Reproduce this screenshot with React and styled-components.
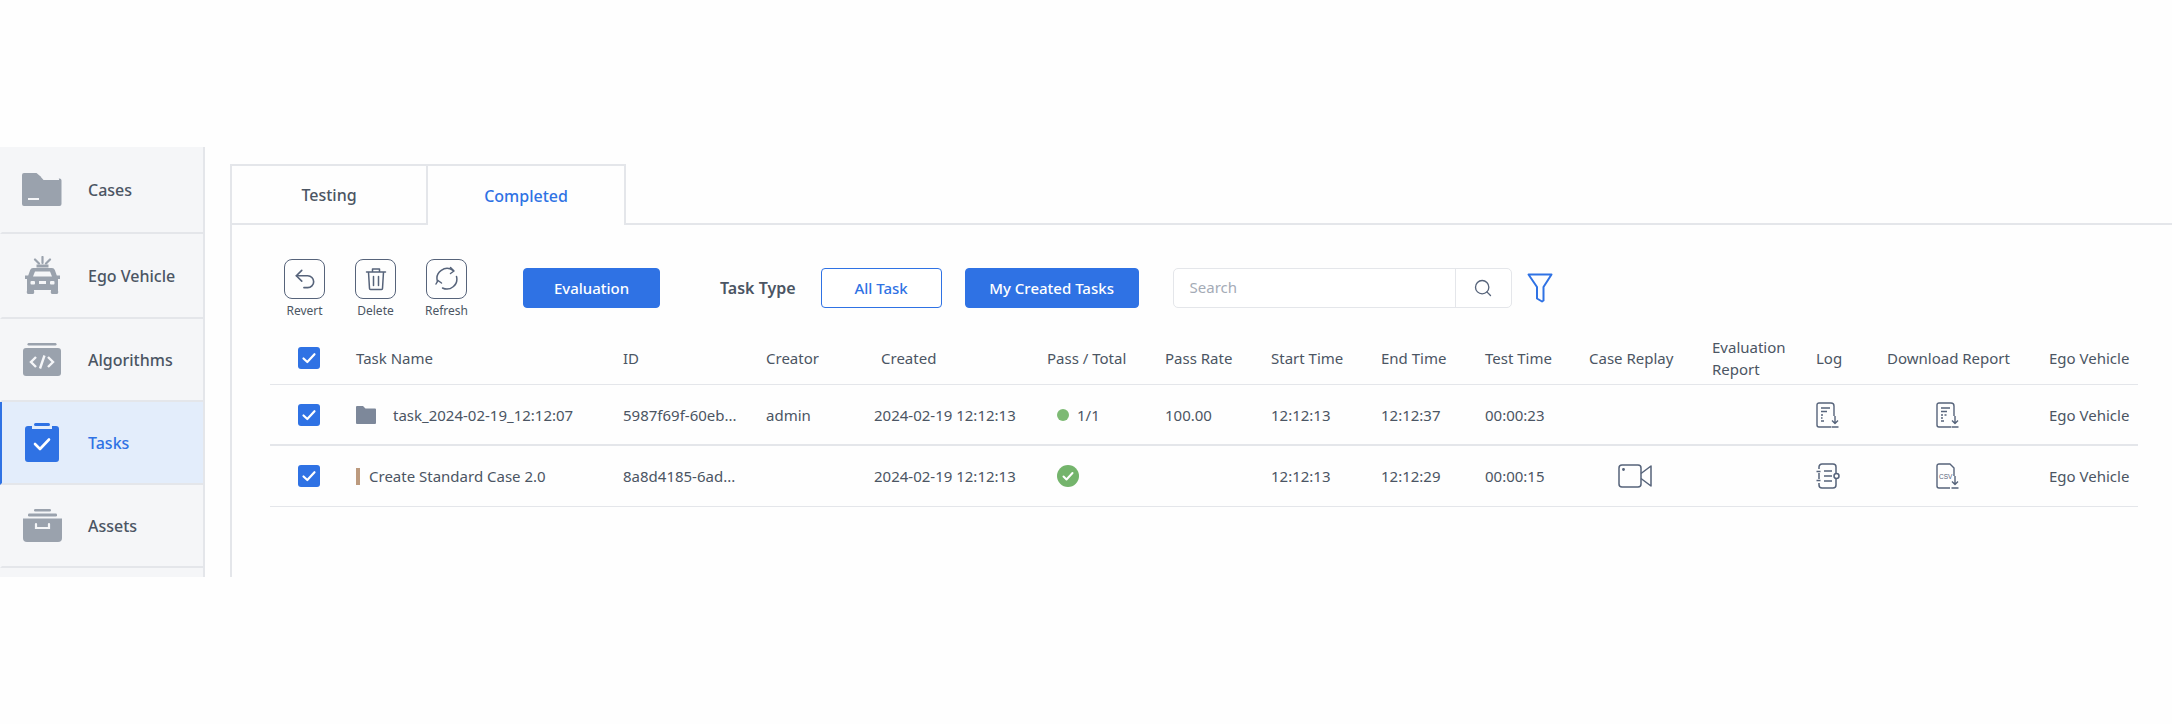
import styled, { createGlobalStyle } from "styled-components";
import { Undo2, Search } from "lucide-react";

const BLUE = "#2f72e4";
const INK = "#4b5563";
const LINE = "#e4e6ea";
const COLUMNS = "86px 267px 143px 108px 173px 118px 106px 110px 104px 104px 123px 104px 71px 162px 89px";

const GlobalStyle = createGlobalStyle`
  html, body { margin: 0; padding: 0; background: #fefefe; }
  body { font-family: "Noto Sans", "Open Sans", sans-serif; color: ${INK}; }
  * { box-sizing: border-box; }
`;

const Page = styled.div`
  width: 2172px;
  height: 724px;
  padding-top: 147px;
  display: flex;
  align-items: flex-start;
  overflow: hidden;
`;

const Sidebar = styled.nav`
  width: 205px;
  height: 430px;
  flex: none;
  background: #f5f6f8;
  border-right: 2px solid ${LINE};
  overflow: hidden;
`;

const NavItem = styled.div`
  height: ${(p) => p.$h}px;
  display: flex;
  align-items: center;
  gap: 0;
  border-bottom: 2px solid ${LINE};
  border-left: 2px solid ${(p) => (p.$active ? BLUE : "transparent")};
  background: ${(p) => (p.$active ? "#e3edfb" : "transparent")};
  color: ${(p) => (p.$active ? BLUE : INK)};
  font-size: 16px;
  font-weight: 500;
`;

const NavIcon = styled.span`
  width: 86px;
  flex: none;
  display: flex;
  justify-content: center;
  padding-right: 6px;
`;

const Main = styled.main`
  flex: 1;
  min-width: 0;
  height: 413px;
  margin: 17px 0 0 25px;
  border-left: 2px solid ${LINE};
`;

const Tabs = styled.div`
  display: flex;
  height: 61px;
  border-bottom: 2px solid ${LINE};
`;

const Tab = styled.div`
  width: ${(p) => p.$w}px;
  height: ${(p) => (p.$active ? 61 : 59)}px;
  display: flex;
  align-items: center;
  justify-content: center;
  border-top: 2px solid ${LINE};
  border-right: 2px solid ${LINE};
  background: #fefefe;
  color: ${(p) => (p.$active ? BLUE : INK)};
  font-size: 16px;
  font-weight: 500;
`;

const Toolbar = styled.div`
  display: flex;
  align-items: flex-start;
  height: 72px;
  padding: 34px 0 0 52px;
  box-sizing: content-box;
  height: 38px;
  padding-bottom: 34px;
`;

const Tools = styled.div`
  display: flex;
  gap: 30px;
  margin-right: 56px;
`;

const Tool = styled.div`
  width: 41px;
  display: flex;
  flex-direction: column;
  align-items: center;
  gap: 3px;
  font-size: 12px;
  white-space: nowrap;
`;

const ToolBox = styled.span`
  width: 41px;
  height: 40px;
  display: flex;
  align-items: center;
  justify-content: center;
  border: 1.5px solid #56637a;
  border-radius: 8px;
  color: #56637a;
`;

const Button = styled.div`
  width: ${(p) => p.$w}px;
  height: 40px;
  margin-top: 9px;
  margin-left: ${(p) => p.$ml || 0}px;
  display: flex;
  align-items: center;
  justify-content: center;
  border: 1.5px solid ${BLUE};
  border-radius: 4px;
  background: ${(p) => (p.$outline ? "#fff" : BLUE)};
  color: ${(p) => (p.$outline ? BLUE : "#fff")};
  font-size: 15px;
  font-weight: 500;
`;

const TypeLabel = styled.span`
  margin: 9px 0 0 60px;
  height: 40px;
  line-height: 40px;
  font-size: 16px;
  font-weight: 600;
`;

const SearchBox = styled.div`
  width: 339px;
  height: 40px;
  margin: 9px 0 0 34px;
  display: flex;
  border: 1.5px solid ${LINE};
  border-radius: 5px;
  background: #fff;
`;

const SearchText = styled.div`
  flex: 1;
  padding-left: 16px;
  line-height: 37px;
  font-size: 15px;
  color: #a4abb6;
`;

const SearchButton = styled.div`
  width: 56px;
  display: flex;
  align-items: center;
  justify-content: center;
  border-left: 1.5px solid ${LINE};
  color: #56637a;
`;

const FilterIcon = styled.span`
  display: flex;
  margin: 14px 0 0 15px;
`;

const Table = styled.div`
  width: 1868px;
  margin-left: 38px;
`;

const Row = styled.div`
  display: grid;
  grid-template-columns: ${COLUMNS};
  align-items: center;
  height: ${(p) => p.$h}px;
  border-bottom: ${(p) => p.$line}px solid ${LINE};
  font-size: 15px;
  white-space: nowrap;
`;

const Cell = styled.div`
  display: flex;
  align-items: center;
  padding-left: ${(p) => p.$pl || 0}px;
  gap: ${(p) => p.$gap || 0}px;
`;

const HeadCell = styled(Cell)`
  white-space: normal;
  line-height: 22px;
`;

const Check = styled.span`
  width: 22px;
  height: 22px;
  margin-left: 28px;
  display: flex;
  align-items: center;
  justify-content: center;
  border-radius: 3px;
  background: ${BLUE};
`;

const TanBar = styled.span`
  width: 4px;
  height: 17px;
  background: #bc9a7e;
`;

const Dot = styled.span`
  width: 12px;
  height: 12px;
  border-radius: 50%;
  background: #7dba74;
`;

const CheckMark = () => (
  <svg width="16" height="16" viewBox="0 0 16 16" fill="none" stroke="#fff" strokeWidth="2.2" strokeLinecap="round" strokeLinejoin="round">
    <path d="M2.5 8.5 6.3 12 13.5 4.2" />
  </svg>
);

const CheckBox = () => (
  <Check>
    <CheckMark />
  </Check>
);

const FolderNav = () => (
  <svg width="40" height="33" viewBox="0 0 40 33">
    <path fill="#9aa2ad" d="M2 0h12.5L21 5.5h16.5a2 2 0 0 1 2 2V31a2 2 0 0 1-2 2H2a2 2 0 0 1-2-2V2a2 2 0 0 1 2-2z" />
    <path fill="#f5f6f8" d="M19 4h16a2 2 0 0 1 2 2v1H21.5z" />
    <rect x="6" y="25" width="11" height="2" fill="#f5f6f8" />
  </svg>
);

const CarNav = () => (
  <svg width="35" height="40" viewBox="0 0 35 40">
    <path fill="none" stroke="#9aa2ad" strokeWidth="2.2" strokeLinecap="round" d="M17.5 1v6M10 3.5l4 4M25 3.5l-4 4" />
    <path fill="#9aa2ad" d="M11.5 8.5h12v3h-12z" />
    <path fill="#9aa2ad" d="M8 12h19a3 3 0 0 1 2.8 2l2 5.5H35V23h-2v12a2 2 0 0 1-2 3h-3a2 2 0 0 1-2-3v-1H9v1a2 2 0 0 1-2 3H4a2 2 0 0 1-2-3V23H0v-3.500h3.200l2-5.500A3 3 0 0 1 8 12z" />
    <path fill="#f5f6f8" d="M10 15.500h15l2 5H8z" />
    <rect x="5.500" y="25" width="4.500" height="3.500" rx="1" fill="#f5f6f8" />
    <rect x="25" y="25" width="4.500" height="3.500" rx="1" fill="#f5f6f8" />
    <rect x="14" y="25" width="7" height="3" fill="#f5f6f8" />
  </svg>
);

const CodeNav = () => (
  <svg width="38" height="33" viewBox="0 0 38 33">
    <rect x="4.500" y="0" width="29" height="2.500" rx="1.200" fill="#9aa2ad" />
    <rect x="0" y="5" width="38" height="28" rx="3" fill="#9aa2ad" />
    <path fill="none" stroke="#f5f6f8" strokeWidth="2.400" d="M13 14l-5 5 5 5M25 14l5 5-5 5M21.500 12.500l-4.500 13" />
  </svg>
);

const TaskNav = () => (
  <svg width="34" height="39" viewBox="0 0 34 39">
    <rect x="9" y="0" width="16" height="3" rx="1.500" fill={BLUE} />
    <path fill={BLUE} d="M3 3h4v3h20V3h4a3 3 0 0 1 3 3v30a3 3 0 0 1-3 3H3a3 3 0 0 1-3-3V6a3 3 0 0 1 3-3z" />
    <path fill="none" stroke="#fff" strokeWidth="2.600" strokeLinecap="round" strokeLinejoin="round" d="M10 21l5 5 9-9.500" />
  </svg>
);

const BoxNav = () => (
  <svg width="39" height="33" viewBox="0 0 39 33">
    <rect x="11" y="0" width="17" height="2.400" rx="1.200" fill="#9aa2ad" />
    <rect x="5" y="4.500" width="29" height="3" rx="1.200" fill="#9aa2ad" />
    <path fill="#9aa2ad" d="M0 9.500h39V29a4 4 0 0 1-4 4H4a4 4 0 0 1-4-4z" />
    <path fill="none" stroke="#f5f6f8" strokeWidth="2.200" strokeLinecap="round" d="M13 15v4h13v-4" />
  </svg>
);

const TrashIcon = () => (
  <svg width="22" height="24" viewBox="0 0 22 24" fill="none" stroke="currentColor" strokeWidth="1.500" strokeLinecap="round" strokeLinejoin="round">
    <path d="M1.500 5h19M7.500 5V2h7v3M3.500 5l1 16.500a1 1 0 0 0 1 1h11a1 1 0 0 0 1-1L18.500 5M8.500 9.500v9M13.500 9.500v9" />
  </svg>
);

const RefreshIcon = () => (
  <svg width="26" height="26" viewBox="0 0 26 26" fill="none" stroke="currentColor" strokeWidth="1.500" strokeLinecap="round" strokeLinejoin="round">
    <path d="M3.500 15.500A10 10 0 0 1 19 4.500M22.500 10.500A10 10 0 0 1 8.500 22" />
    <path d="M16.500 1.500l3.500 3.500-3.500 2.500M2 18l2-3.500 3.500 2.500" />
  </svg>
);

const FunnelIcon = () => (
  <svg width="26" height="30" viewBox="0 0 26 30" fill="none" stroke={BLUE} strokeWidth="2" strokeLinejoin="round">
    <path d="M1.500 1.500h23l-8 12.500v13.500l-1.500 1-5-3V14z" />
  </svg>
);

const SmallFolder = () => (
  <svg width="20" height="18" viewBox="0 0 20 18">
    <path fill="#7d889a" d="M1 0h6l2.500 2.500H19a1 1 0 0 1 1 1V17a1 1 0 0 1-1 1H1a1 1 0 0 1-1-1V1a1 1 0 0 1 1-1z" />
  </svg>
);

const PassCircle = () => (
  <svg width="22" height="22" viewBox="0 0 22 22">
    <circle cx="11" cy="11" r="11" fill="#74b46c" />
    <path fill="none" stroke="#fff" strokeWidth="2" strokeLinecap="round" strokeLinejoin="round" d="M6.500 11.500l3 3 6-6.500" />
  </svg>
);

const VideoIcon = () => (
  <svg width="34" height="24" viewBox="0 0 34 24" fill="none" stroke="#56637a" strokeWidth="1.500" strokeLinejoin="round">
    <rect x="1" y="1" width="22" height="22" rx="3" />
    <path d="M23 9.500 33 2v20l-10-7.500" />
    <circle cx="5.500" cy="5.500" r="0.700" fill="#56637a" />
  </svg>
);

const DocOutline = "M15 16V4.500L12 1H3a2 2 0 0 0-2 2v20a2 2 0 0 0 2 2h11";

const LogDownload = ({ dashed }) => (
  <svg width="24" height="26" viewBox="0 0 24 26" fill="none" stroke="#56637a" strokeWidth="1.400" strokeLinejoin="round">
    <path d="M18 14V4a3 3 0 0 0-3-3H3a2 2 0 0 0-2 2v20a2 2 0 0 0 2 2h12" />
    <path d="M5 6h9M5 9.500h6" />
    <path d={dashed ? "M5 13h2M8.500 13h2M5 16h2M5 19h3" : "M5 13h2M5 16h1.500M5 19h3"} strokeWidth="1.600" />
    <path d="M19 14v7.500M16 18.500l3 3 3-3M15.500 25h7" />
  </svg>
);

const NotebookIcon = () => (
  <svg width="24" height="26" viewBox="0 0 24 26" fill="none" stroke="#56637a" strokeWidth="1.500" strokeLinejoin="round">
    <path d="M3 6V4a3 3 0 0 1 3-3h11a3 3 0 0 1 3 3v6M20 16v6a3 3 0 0 1-3 3H6a3 3 0 0 1-3-3v-2M3 10v6" />
    <path d="M0.500 8.500h4M0.500 17.500h4M8 8h8M8 13h8M8 18h8" />
    <circle cx="20.500" cy="13" r="2.500" />
  </svg>
);

const CsvIcon = () => (
  <svg width="24" height="26" viewBox="0 0 24 26" fill="none" stroke="#56637a" strokeWidth="1.400" strokeLinejoin="round">
    <path d="M18 13V5l-4-4H3a2 2 0 0 0-2 2v20a2 2 0 0 0 2 2h11" />
    <text x="3" y="15.500" fontSize="6.500" fontFamily="Liberation Sans, sans-serif" fill="#56637a" stroke="none">CSV</text>
    <path d="M19 13v8.500M16 18.500l3 3 3-3M15.500 25h7" />
  </svg>
);

const NAV = [
  { label: "Cases", icon: <FolderNav />, h: 87 },
  { label: "Ego Vehicle", icon: <CarNav />, h: 85 },
  { label: "Algorithms", icon: <CodeNav />, h: 83 },
  { label: "Tasks", icon: <TaskNav />, h: 83, active: true },
  { label: "Assets", icon: <BoxNav />, h: 83 },
];

function App() {
  return (
    <>
      <GlobalStyle />
      <Page>
        <Sidebar>
          {NAV.map((item) => (
            <NavItem key={item.label} $h={item.h} $active={item.active}>
              <NavIcon>{item.icon}</NavIcon>
              {item.label}
            </NavItem>
          ))}
        </Sidebar>
        <Main>
          <Tabs>
            <Tab $w={196}>Testing</Tab>
            <Tab $w={198} $active>
              Completed
            </Tab>
          </Tabs>
          <Toolbar>
            <Tools>
              <Tool>
                <ToolBox>
                  <Undo2 size={26} strokeWidth={1.5} />
                </ToolBox>
                Revert
              </Tool>
              <Tool>
                <ToolBox>
                  <TrashIcon />
                </ToolBox>
                Delete
              </Tool>
              <Tool>
                <ToolBox>
                  <RefreshIcon />
                </ToolBox>
                Refresh
              </Tool>
            </Tools>
            <Button $w={137}>Evaluation</Button>
            <TypeLabel>Task Type</TypeLabel>
            <Button $w={121} $outline $ml={25}>
              All Task
            </Button>
            <Button $w={174} $ml={23}>
              My Created Tasks
            </Button>
            <SearchBox>
              <SearchText>Search</SearchText>
              <SearchButton>
                <Search size={20} strokeWidth={1.6} />
              </SearchButton>
            </SearchBox>
            <FilterIcon>
              <FunnelIcon />
            </FilterIcon>
          </Toolbar>
          <Table>
            <Row $h={54} $line={1}>
              <CheckBox />
              <HeadCell>Task Name</HeadCell>
              <HeadCell>ID</HeadCell>
              <HeadCell>Creator</HeadCell>
              <HeadCell $pl={7}>Created</HeadCell>
              <HeadCell>Pass / Total</HeadCell>
              <HeadCell>Pass Rate</HeadCell>
              <HeadCell>Start Time</HeadCell>
              <HeadCell>End Time</HeadCell>
              <HeadCell>Test Time</HeadCell>
              <HeadCell>Case Replay</HeadCell>
              <HeadCell>Evaluation Report</HeadCell>
              <HeadCell>Log</HeadCell>
              <HeadCell>Download Report</HeadCell>
              <HeadCell>Ego Vehicle</HeadCell>
            </Row>
            <Row $h={61} $line={2}>
              <CheckBox />
              <Cell $gap={17}>
                <SmallFolder />
                task_2024-02-19_12:12:07
              </Cell>
              <Cell>5987f69f-60eb...</Cell>
              <Cell>admin</Cell>
              <Cell>2024-02-19 12:12:13</Cell>
              <Cell $pl={10} $gap={8}>
                <Dot />
                1/1
              </Cell>
              <Cell>100.00</Cell>
              <Cell>12:12:13</Cell>
              <Cell>12:12:37</Cell>
              <Cell>00:00:23</Cell>
              <Cell />
              <Cell />
              <Cell>
                <LogDownload />
              </Cell>
              <Cell $pl={49}>
                <LogDownload dashed />
              </Cell>
              <Cell>Ego Vehicle</Cell>
            </Row>
            <Row $h={61} $line={1}>
              <CheckBox />
              <Cell $gap={9}>
                <TanBar />
                Create Standard Case 2.0
              </Cell>
              <Cell>8a8d4185-6ad...</Cell>
              <Cell />
              <Cell>2024-02-19 12:12:13</Cell>
              <Cell $pl={10}>
                <PassCircle />
              </Cell>
              <Cell />
              <Cell>12:12:13</Cell>
              <Cell>12:12:29</Cell>
              <Cell>00:00:15</Cell>
              <Cell $pl={29}>
                <VideoIcon />
              </Cell>
              <Cell />
              <Cell>
                <NotebookIcon />
              </Cell>
              <Cell $pl={49}>
                <CsvIcon />
              </Cell>
              <Cell>Ego Vehicle</Cell>
            </Row>
          </Table>
        </Main>
      </Page>
    </>
  );
}

export default App;
